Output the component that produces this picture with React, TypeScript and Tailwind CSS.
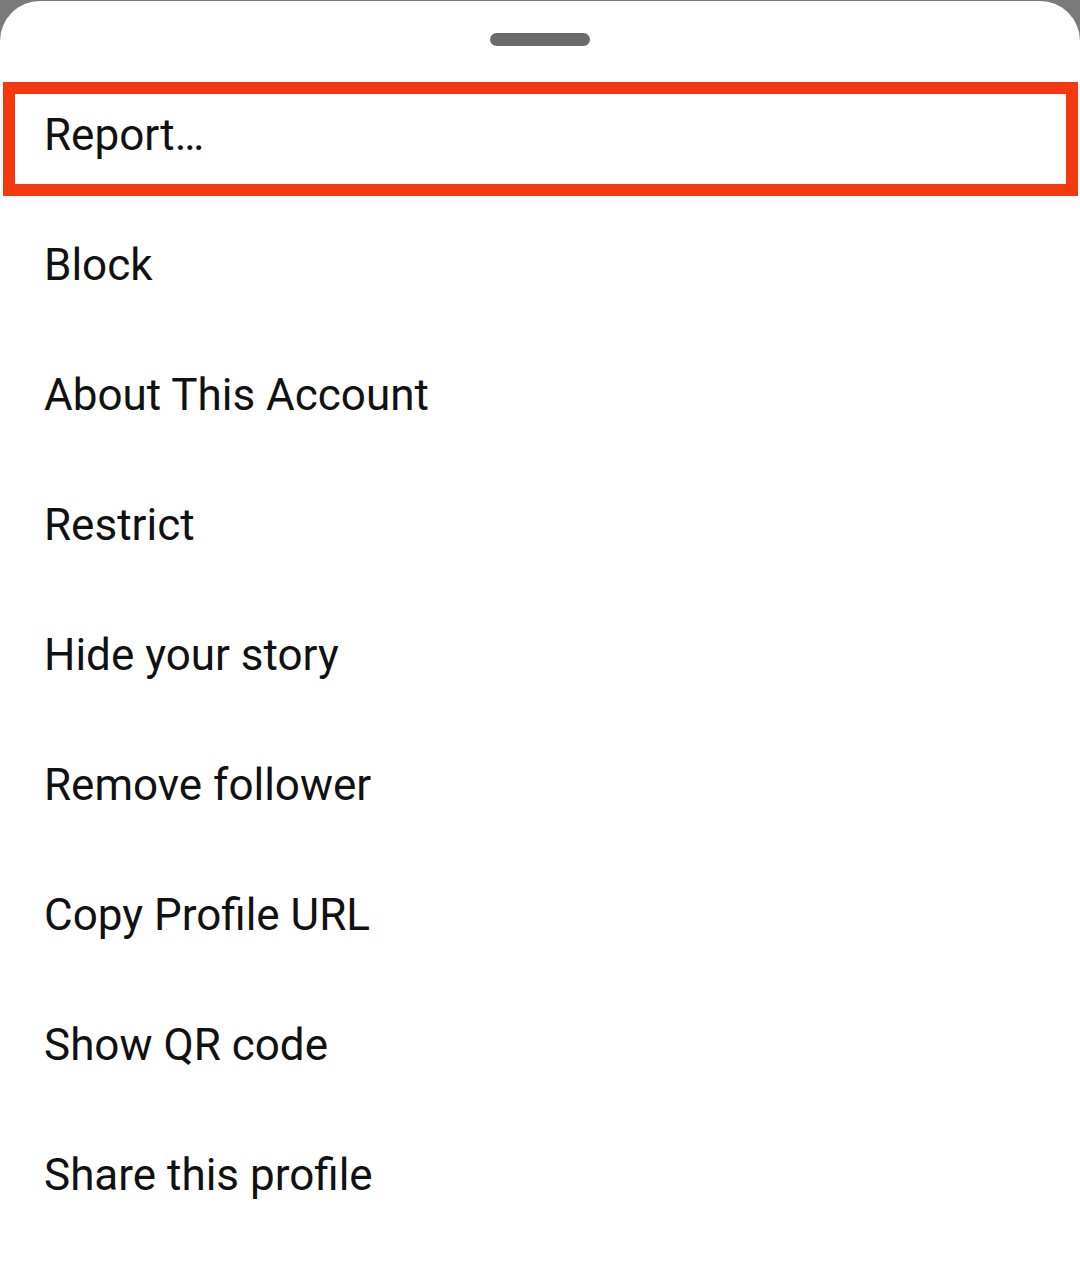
import React from 'react';

const items = [
    'Report…',
    'Block',
    'About This Account',
    'Restrict',
    'Hide your story',
    'Remove follower',
    'Copy Profile URL',
    'Show QR code',
    'Share this profile',
];

const App: React.FC = () => {
    return (
        <div className="min-h-[1277px] w-[1080px] bg-[#7a7a7a] pt-px" style={{ fontFamily: 'Roboto, "Noto Sans", sans-serif' }}>
            <div className="min-h-[1276px] bg-white rounded-t-[40px]">
                <div className="flex justify-center pt-[32px]">
                    <div className="w-[100px] h-[13px] rounded-full bg-[#6b6b6b]" />
                </div>
                <ul className="mt-[24px]">
                    {items.map((label, i) => (
                        <li key={label} className="relative h-[130px] flex items-center px-[44px]">
                            {i === 0 && (
                                <div className="absolute left-[3px] right-[2px] top-[12px] bottom-[4px] border-[12px] border-[#f5380f]" />
                            )}
                            <span className="text-[44px] leading-none text-[#111]">{label}</span>
                        </li>
                    ))}
                </ul>
            </div>
        </div>
    );
};

export default App;
